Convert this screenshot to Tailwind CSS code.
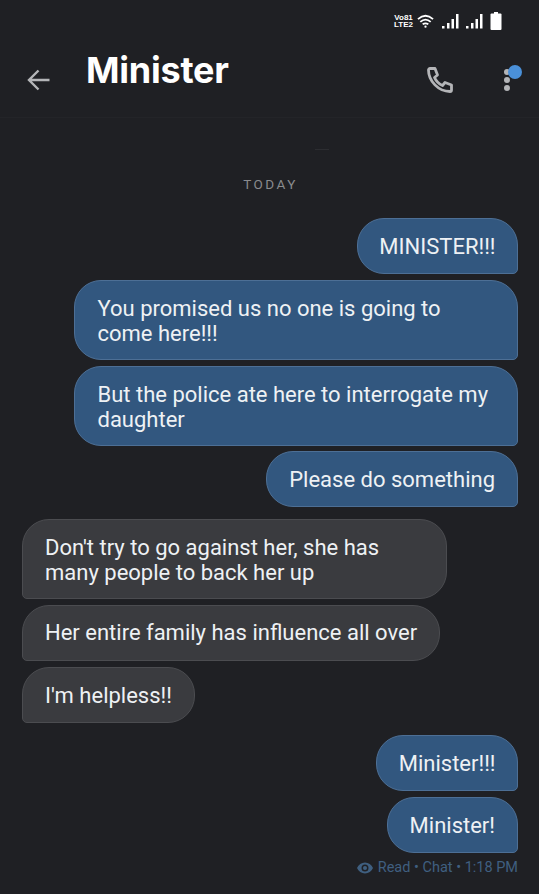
<!DOCTYPE html>
<html lang="en">
<head>
    <meta charset="UTF-8">
    <meta name="viewport" content="width=device-width, initial-scale=1.0">
    <title>Minister</title>
    <script src="https://cdn.jsdelivr.net/npm/@tailwindcss/browser@4"></script>
</head>
<body class="bg-[#1f2024] font-['Roboto',sans-serif] text-[#eef1f4] overflow-hidden">
<div class="w-[539px] h-[894px] flex flex-col">

    <!-- Status bar -->
    <div class="h-[40px] flex items-center justify-end pr-[37px] pt-[2px] text-white">
        <div class="font-['Liberation_Sans',sans-serif] font-bold text-[8px] leading-[7.500px] text-center">Vo81<br>LTE2</div>
        <svg class="ml-[4px]" width="17" height="16" viewBox="0 0 18 16" fill="none" stroke="white" stroke-width="1.900">
            <path d="M1 6 Q9 -1 17 6"/><path d="M3.500 9 Q9 4 14.500 9"/><path d="M6 11.500 Q9 9.500 12 11.500"/>
            <circle cx="9" cy="14" r="1.200" fill="white" stroke="none"/>
        </svg>
        <svg class="ml-[8px]" width="17" height="16" viewBox="0 0 17 16" fill="white">
            <rect x="0" y="13" width="2.500" height="2.500"/><rect x="5" y="10" width="2.500" height="5.500"/><rect x="9.500" y="6" width="2.500" height="9.500"/><rect x="14" y="1" width="2.500" height="14.500"/>
        </svg>
        <svg class="ml-[7px]" width="17" height="16" viewBox="0 0 17 16" fill="white">
            <rect x="0" y="13" width="2.500" height="2.500"/><rect x="5" y="10" width="2.500" height="5.500"/><rect x="9.500" y="6" width="2.500" height="9.500"/><rect x="14" y="1" width="2.500" height="14.500"/>
        </svg>
        <svg class="ml-[7px]" width="12" height="18" viewBox="0 0 12 18" fill="white">
            <rect x="4" y="0" width="4" height="2"/><rect x="0.500" y="1.500" width="11" height="16.500" rx="1"/>
        </svg>
    </div>

    <!-- Header -->
    <div class="h-[78px] flex items-start relative border-b border-[#232428]">
        <svg class="mt-[29px] ml-[27px]" width="23" height="22" viewBox="0 0 23 22" fill="none" stroke="#b4b5b8" stroke-width="2.400">
            <path d="M22.500 11H2M11.500 1.500L2 11l9.500 9.500"/>
        </svg>
        <h1 class="ml-[36px] mt-[8px] font-['Inter',sans-serif] font-bold text-[36px] leading-[44px] text-white tracking-[-0.250px]">Minister</h1>
        <svg class="absolute left-[427px] top-[26px]" width="28" height="28" viewBox="0 0 28 28" fill="none" stroke="#b4b5b8" stroke-width="2.800" stroke-linejoin="round">
            <path d="M3 2.500h5l2.500 6.500-3 2.500c1.500 3.500 4.500 6.500 8 8l2.500-3 6.500 2.500v5c0 .8-.7 1.500-1.500 1.500C11.500 25.500 1.500 15 1.500 4c0-.8.700-1.500 1.500-1.500z"/>
        </svg>
        <div class="absolute left-[504px] top-[29px] flex flex-col gap-[2px]">
            <span class="w-[6px] h-[6px] rounded-full bg-[#b4b5b8]"></span>
            <span class="w-[6px] h-[6px] rounded-full bg-[#b4b5b8]"></span>
            <span class="w-[6px] h-[6px] rounded-full bg-[#b4b5b8]"></span>
        </div>
        <span class="absolute left-[508px] top-[25px] w-[14px] h-[14px] rounded-full bg-[#4a90d9]"></span>
    </div>

    <!-- Faint mark above the date -->
    <div class="mt-[31px] ml-[315px] w-[14px] h-[1px] bg-[#2c2d31]"></div>

    <!-- Date -->
    <div class="mt-[26px] pl-[2px] text-center text-[13.500px] leading-[16px] tracking-[2.500px] text-[#8a8b8e]">TODAY</div>

    <!-- Messages -->
    <div class="mt-[26px] px-[21px] flex flex-col text-[22px] leading-[25px]">
        <div class="self-end bg-[#32577f] border border-[#4d6f95] rounded-[27px] rounded-br-[5px] px-[21.500px] pt-[15px] pb-[14px]">MINISTER!!!</div>
        <div class="mt-[6px] self-end w-[444px] bg-[#32577f] border border-[#4d6f95] rounded-[27px] rounded-br-[5px] px-[22.500px] pt-[15px] pb-[13px]">You promised us no one is going to come here!!!</div>
        <div class="mt-[6px] self-end w-[444px] bg-[#32577f] border border-[#4d6f95] rounded-[27px] rounded-br-[5px] px-[22.500px] pt-[14.500px] pb-[13px]">But the police ate here to interrogate my daughter</div>
        <div class="mt-[5.500px] self-end bg-[#32577f] border border-[#4d6f95] rounded-[27px] rounded-br-[5px] px-[22px] pt-[15px] pb-[14px]">Please do something</div>

        <div class="mt-[12px] ml-[1px] self-start w-[425px] bg-[#3a3b3f] border border-[#4b4c50] rounded-[27px] rounded-bl-[5px] px-[22px] pt-[15px] pb-[13px]">Don't try to go against her, she has many people to back her up</div>
        <div class="mt-[5.500px] ml-[1px] self-start bg-[#3a3b3f] border border-[#4b4c50] rounded-[27px] rounded-bl-[5px] px-[22px] pt-[14px] pb-[15px]">Her entire family has influence all over</div>
        <div class="mt-[6px] ml-[1px] self-start bg-[#3a3b3f] border border-[#4b4c50] rounded-[27px] rounded-bl-[5px] px-[22px] pt-[15px] pb-[14px]">I'm helpless!!</div>

        <div class="mt-[12px] self-end bg-[#32577f] border border-[#4d6f95] rounded-[27px] rounded-br-[5px] px-[21.500px] pt-[15px] pb-[14px]">Minister!!!</div>
        <div class="mt-[6px] self-end bg-[#32577f] border border-[#4d6f95] rounded-[27px] rounded-br-[5px] px-[22px] pt-[15px] pb-[14px]">Minister!</div>

        <!-- Read receipt -->
        <div class="mt-[6px] self-end flex items-center gap-[5px] text-[14.500px] leading-[18px] text-[#3f5f80]">
            <svg width="16" height="12" viewBox="0 0 16 12" fill="#3f5f80">
                <path fill-rule="evenodd" d="M8 0.500C4.500 0.500 1.500 2.700 0 6c1.500 3.300 4.500 5.500 8 5.500s6.500-2.200 8-5.500c-1.500-3.300-4.500-5.500-8-5.500zM8 9.500a3.500 3.500 0 1 1 0-7 3.500 3.500 0 0 1 0 7z"/>
                <circle cx="8" cy="6" r="2"/>
            </svg>
            <span>Read • Chat • 1:18 PM</span>
        </div>
    </div>
</div>
</body>
</html>
